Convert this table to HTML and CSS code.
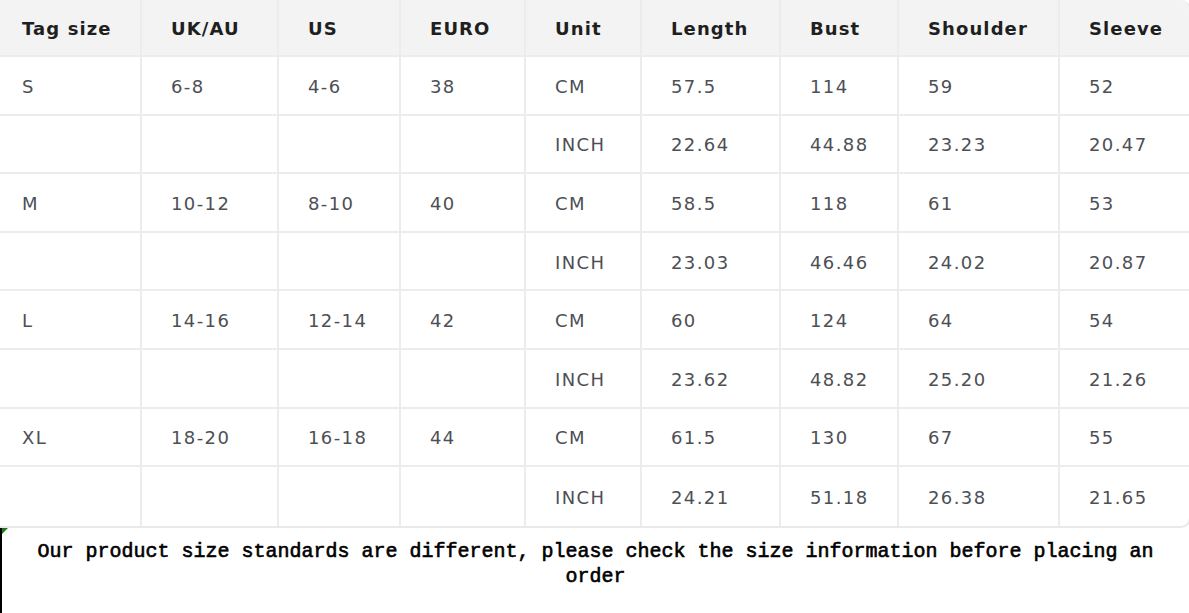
FILE: index.html
```html
<!DOCTYPE html>
<html>
<head>
<meta charset="utf-8">
<link rel="stylesheet" href="styles.css">
</head>
<body>
<div class="sheet">
  <table class="size-table">
    <colgroup>
      <col class="c1"><col class="c2"><col class="c3"><col class="c4"><col class="c5"><col class="c6"><col class="c7"><col class="c8"><col class="c9">
    </colgroup>
    <thead>
      <tr><th>Tag size</th><th>UK/AU</th><th>US</th><th>EURO</th><th>Unit</th><th>Length</th><th>Bust</th><th>Shoulder</th><th>Sleeve</th></tr>
    </thead>
    <tbody>
      <tr><td>S</td><td>6-8</td><td>4-6</td><td>38</td><td>CM</td><td>57.5</td><td>114</td><td>59</td><td>52</td></tr>
      <tr><td></td><td></td><td></td><td></td><td>INCH</td><td>22.64</td><td>44.88</td><td>23.23</td><td>20.47</td></tr>
      <tr><td>M</td><td>10-12</td><td>8-10</td><td>40</td><td>CM</td><td>58.5</td><td>118</td><td>61</td><td>53</td></tr>
      <tr><td></td><td></td><td></td><td></td><td>INCH</td><td>23.03</td><td>46.46</td><td>24.02</td><td>20.87</td></tr>
      <tr><td>L</td><td>14-16</td><td>12-14</td><td>42</td><td>CM</td><td>60</td><td>124</td><td>64</td><td>54</td></tr>
      <tr><td></td><td></td><td></td><td></td><td>INCH</td><td>23.62</td><td>48.82</td><td>25.20</td><td>21.26</td></tr>
      <tr><td>XL</td><td>18-20</td><td>16-18</td><td>44</td><td>CM</td><td>61.5</td><td>130</td><td>67</td><td>55</td></tr>
      <tr><td></td><td></td><td></td><td></td><td>INCH</td><td>24.21</td><td>51.18</td><td>26.38</td><td>21.65</td></tr>
    </tbody>
  </table>
  <div class="note">
    <p>Our product size standards are different, please check the size information before placing an order</p>
  </div>
</div>
</body>
</html>
```
FILE: styles.css
```css
html, body {
  margin: 0;
  padding: 0;
  background: #ffffff;
}

.sheet {
  width: 1189px;
  height: 613px;
  overflow: hidden;
  display: flex;
  flex-direction: column;
}

.size-table {
  width: 1189px;
  table-layout: fixed;
  border-collapse: separate;
  border-spacing: 0;
  font-family: "DejaVu Sans", "Open Sans", sans-serif;
  border-right: 2px solid #e9e9e9;
  border-bottom: 2px solid #e9e9e9;
  border-radius: 0 10px 10px 0;
  overflow: hidden;
  flex: none;
}

.c1 { width: 140px; }
.c2 { width: 137px; }
.c3 { width: 122px; }
.c4 { width: 125px; }
.c5 { width: 116px; }
.c6 { width: 139px; }
.c7 { width: 118px; }
.c8 { width: 161px; }
.c9 { width: 131px; }

.size-table th,
.size-table td {
  text-align: left;
  padding: 2px 0 0 29px;
  border-left: 2px solid #ececec;
  border-bottom: 2px solid #ececec;
  box-sizing: border-box;
  white-space: nowrap;
}

.size-table th:first-child,
.size-table td:first-child {
  border-left: none;
  padding-left: 22px;
}

.size-table tbody tr:last-child td {
  border-bottom: none;
}

.size-table th {
  height: 57px;
  background: #f3f3f3;
  color: #1f1f1f;
  font-size: 18px;
  font-weight: 700;
  letter-spacing: 1.1px;
}

.size-table td {
  height: 58.6px;
  color: #4d4f55;
  font-size: 18px;
  font-weight: 400;
  letter-spacing: 1.4px;
}

.note {
  position: relative;
  flex: 1;
  border-left: 2px solid #000000;
  padding-top: 11px;
}

.note::before {
  content: "";
  position: absolute;
  left: 0;
  top: 0;
  width: 0;
  height: 0;
  border-top: 6px solid #1c7a1c;
  border-right: 6px solid transparent;
}

.note p {
  margin: 0;
  padding: 0 20px;
  text-align: center;
  font-family: "Liberation Mono", "DejaVu Sans Mono", monospace;
  font-weight: 400;
  -webkit-text-stroke: 0.6px #000000;
  font-size: 20px;
  line-height: 25px;
  color: #000000;
}
```
